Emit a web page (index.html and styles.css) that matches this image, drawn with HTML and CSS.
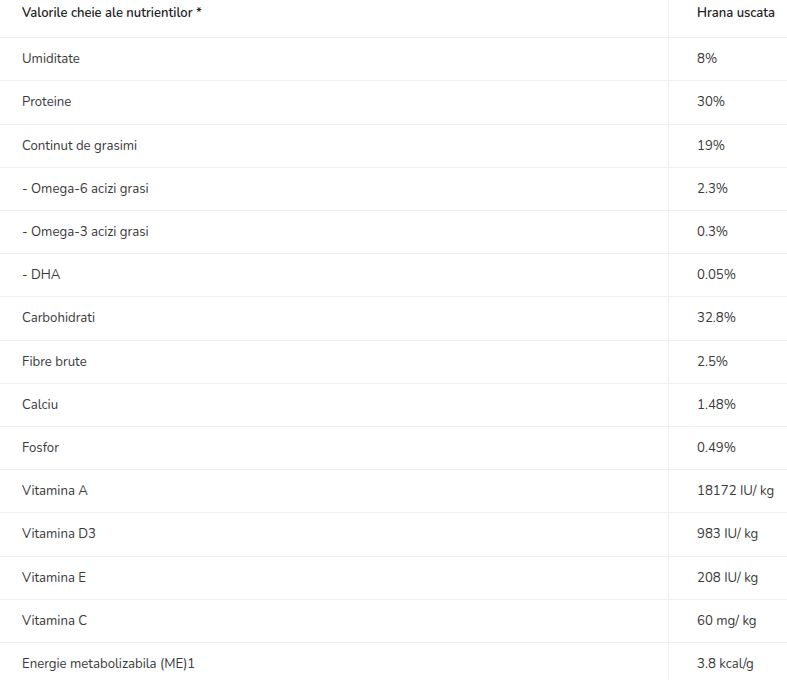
FILE: index.html
```html
<!DOCTYPE html>
<html lang="ro">
<head>
<meta charset="utf-8">
<link rel="stylesheet" href="styles.css">
</head>
<body>
<table class="nutr">
  <thead>
    <tr><th class="c1">Valorile cheie ale nutrientilor *</th><th class="c2">Hrana uscata</th></tr>
  </thead>
  <tbody>
    <tr><td>Umiditate</td><td>8%</td></tr>
    <tr><td>Proteine</td><td>30%</td></tr>
    <tr><td>Continut de grasimi</td><td>19%</td></tr>
    <tr><td>- Omega-6 acizi grasi</td><td>2.3%</td></tr>
    <tr><td>- Omega-3 acizi grasi</td><td>0.3%</td></tr>
    <tr><td>- DHA</td><td>0.05%</td></tr>
    <tr><td>Carbohidrati</td><td>32.8%</td></tr>
    <tr><td>Fibre brute</td><td>2.5%</td></tr>
    <tr><td>Calciu</td><td>1.48%</td></tr>
    <tr><td>Fosfor</td><td>0.49%</td></tr>
    <tr><td>Vitamina A</td><td>18172 IU/ kg</td></tr>
    <tr><td>Vitamina D3</td><td>983 IU/ kg</td></tr>
    <tr><td>Vitamina E</td><td>208 IU/ kg</td></tr>
    <tr><td>Vitamina C</td><td>60 mg/ kg</td></tr>
    <tr><td>Energie metabolizabila (ME)1</td><td>3.8 kcal/g</td></tr>
  </tbody>
</table>
</body>
</html>
```
FILE: styles.css
```css
html, body {
  margin: 0;
  padding: 0;
  background: #fff;
}
body {
  font-family: "Nunito", "Lato", "Open Sans", sans-serif;
  color: #3a3a3a;
  font-size: 13.2px;
}
.nutr {
  width: 787px;
  border-collapse: collapse;
  table-layout: fixed;
}
.nutr th, .nutr td {
  text-align: left;
  vertical-align: middle;
  border-bottom: 1px solid #efefef;
  line-height: 18.2px;
}
.nutr th {
  font-weight: 600;
  font-size: 13px;
  color: #222;
  padding: 4px 22px 15px 22px;
  height: 18px;
}
.nutr td {
  font-weight: 400;
  padding: 12px 22px;
}
.nutr th:first-child, .nutr td:first-child {
  width: 624px;
  border-right: 1px solid #efefef;
}
.nutr th:last-child, .nutr td:last-child {
  padding-left: 28px;
  padding-right: 0;
}
.c2 { white-space: nowrap; }
```
